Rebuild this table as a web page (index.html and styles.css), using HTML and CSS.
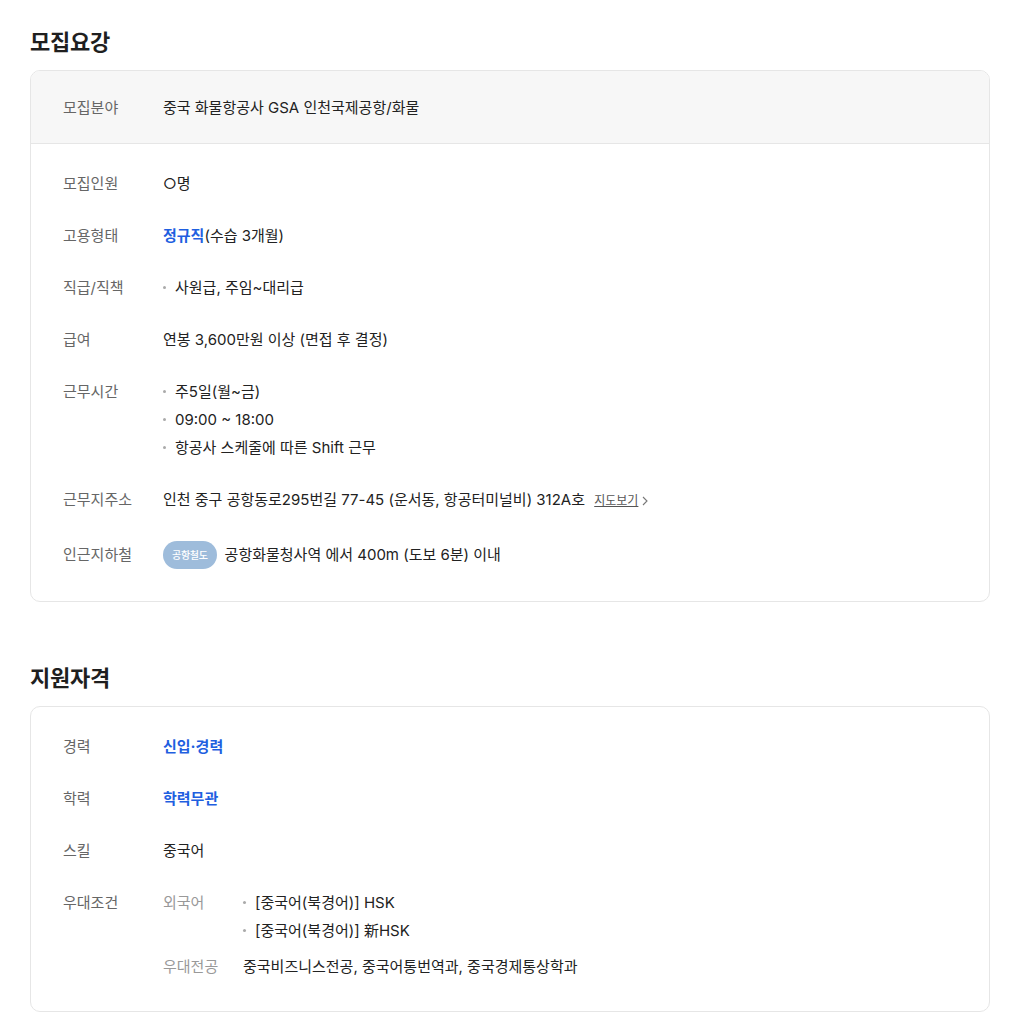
FILE: index.html
```html
<!DOCTYPE html>
<html lang="ko">
<head>
<meta charset="utf-8">
<link rel="stylesheet" href="styles.css">
</head>
<body>
<div class="page">
  <section class="section">
    <h2 class="title">모집요강</h2>
    <div class="card">
      <div class="card-head">
        <div class="row">
          <div class="label">모집분야</div>
          <div class="value">중국 화물항공사 GSA 인천국제공항/화물</div>
        </div>
      </div>
      <div class="card-body">
        <div class="row">
          <div class="label">모집인원</div>
          <div class="value">○명</div>
        </div>
        <div class="row">
          <div class="label">고용형태</div>
          <div class="value"><strong class="blue">정규직</strong>(수습 3개월)</div>
        </div>
        <div class="row">
          <div class="label">직급/직책</div>
          <ul class="value bullets">
            <li>사원급, 주임~대리급</li>
          </ul>
        </div>
        <div class="row">
          <div class="label">급여</div>
          <div class="value">연봉 3,600만원 이상 (면접 후 결정)</div>
        </div>
        <div class="row">
          <div class="label">근무시간</div>
          <ul class="value bullets">
            <li>주5일(월~금)</li>
            <li>09:00 ~ 18:00</li>
            <li>항공사 스케줄에 따른 Shift 근무</li>
          </ul>
        </div>
        <div class="row">
          <div class="label">근무지주소</div>
          <div class="value">인천 중구 공항동로295번길 77-45 (운서동, 항공터미널비) 312A호 <a class="map" href="#">지도보기</a><svg class="chev" width="6" height="10" viewBox="0 0 6 10"><path d="M1 1l4 4-4 4" fill="none" stroke="#777" stroke-width="1.1"/></svg></div>
        </div>
        <div class="row row-subway">
          <div class="label">인근지하철</div>
          <div class="value subway"><span class="badge">공항철도</span><span>공항화물청사역 에서 400m (도보 6분) 이내</span></div>
        </div>
      </div>
    </div>
  </section>

  <section class="section second">
    <h2 class="title">지원자격</h2>
    <div class="card">
      <div class="card-body">
        <div class="row">
          <div class="label">경력</div>
          <div class="value"><strong class="blue">신입·경력</strong></div>
        </div>
        <div class="row">
          <div class="label">학력</div>
          <div class="value"><strong class="blue">학력무관</strong></div>
        </div>
        <div class="row">
          <div class="label">스킬</div>
          <div class="value">중국어</div>
        </div>
        <div class="row">
          <div class="label">우대조건</div>
          <div class="value subs">
            <div class="subrow">
              <div class="sublabel">외국어</div>
              <ul class="bullets">
                <li>[중국어(북경어)] HSK</li>
                <li>[중국어(북경어)] 新HSK</li>
              </ul>
            </div>
            <div class="subrow">
              <div class="sublabel">우대전공</div>
              <div>중국비즈니스전공, 중국어통번역과, 중국경제통상학과</div>
            </div>
          </div>
        </div>
      </div>
    </div>
  </section>
</div>
</body>
</html>
```

FILE: styles.css
```css
* { box-sizing: border-box; }
html, body { margin: 0; padding: 0; background: #fff; }
body {
  font-family: "Inter", "Noto Sans CJK KR", "Noto Sans", sans-serif;
  color: #222;
  font-size: 15px;
  letter-spacing: 0;
}
.page { padding: 26px 34px 0 30px; }
.title {
  margin: 0 0 12px;
  font-size: 22px;
  line-height: 32px;
  font-weight: 700;
  color: #1f1f1f;
  letter-spacing: -0.2px;
}
.second { margin-top: 60px; }
.card {
  border: 1px solid #e6e6e6;
  border-radius: 10px;
  overflow: hidden;
}
.card-head {
  background: #f7f7f7;
  border-bottom: 1px solid #e6e6e6;
  padding: 23px 32px 21px;
}
.card-body {
  padding: 26px 32px 30px;
  display: flex;
  flex-direction: column;
  gap: 24px;
}
.row {
  display: flex;
  line-height: 28px;
}
.label {
  width: 100px;
  flex: none;
  color: #666;
  font-size: 15px;
}
.value { flex: 1; margin: 0; padding: 0; }
.blue { color: #1f5fe0; font-weight: 700; }
.bullets { list-style: none; margin: 0; padding: 0; }
.bullets li { position: relative; padding-left: 12px; }
.bullets li::before {
  content: "";
  position: absolute;
  left: 0;
  top: 12px;
  width: 3px;
  height: 3px;
  border-radius: 50%;
  background: #aaa;
}
.map {
  font-size: 12px;
  color: #555;
  text-decoration: underline;
  margin-left: 5px;
}
.chev { margin-left: 4px; vertical-align: -1px; }
.row-subway { line-height: 32px; }
.subway { display: flex; align-items: center; gap: 8px; }
.badge {
  display: inline-flex;
  align-items: center;
  justify-content: center;
  height: 28px;
  padding: 0 9px;
  border-radius: 14px;
  background: #9ebcdb;
  color: #fff;
  font-size: 10px;
  font-weight: 500;
  letter-spacing: -0.3px;
  line-height: 1;
}
.subs { display: flex; flex-direction: column; gap: 8px; }
.subrow { display: flex; }
.sublabel { width: 80px; flex: none; color: #999; font-size: 15px; }
```
